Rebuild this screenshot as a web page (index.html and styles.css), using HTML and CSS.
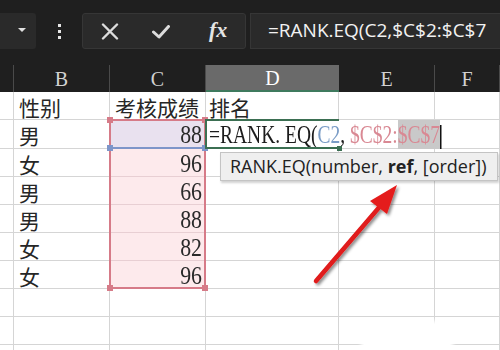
FILE: index.html
```html
<!DOCTYPE html>
<html>
<head>
<meta charset="utf-8">
<link rel="stylesheet" href="styles.css">
</head>
<body>
<div class="app">
  <div class="topbar">
    <div class="namebox"><span class="caret"></span></div>
    <div class="grip"><i></i><i></i><i></i></div>
    <div class="fxbtns">
      <svg class="ico-x" width="18" height="17" viewBox="0 0 18 17"><path d="M2 1.5 L16 15.5 M16 1.5 L2 15.5" stroke="#dcdcdc" stroke-width="2.4" fill="none" stroke-linecap="round"/></svg>
      <svg class="ico-ok" width="18" height="14" viewBox="0 0 18 14"><path d="M1.5 7 L7 12 L16.5 1.5" stroke="#dcdcdc" stroke-width="3" fill="none" stroke-linecap="round" stroke-linejoin="round"/></svg>
      <span class="fx">fx</span>
    </div>
    <div class="formula">=RANK.EQ(C2,$C$2:$C$7</div>
  </div>
  <div class="sheet">
    <div class="hd corner"></div><div class="hd">B</div><div class="hd">C</div><div class="hd active">D</div><div class="hd">E</div><div class="hd">F</div>

    <div class="c"></div><div class="c t">性别</div><div class="c t">考核成绩</div><div class="c t td">排名</div><div class="c"></div><div class="c"></div>
    <div class="c"></div><div class="c t">男</div><div class="c n cv"><span>88</span></div><div class="c"></div><div class="c"></div><div class="c"></div>
    <div class="c"></div><div class="c t">女</div><div class="c n sp"><span>96</span></div><div class="c"></div><div class="c"></div><div class="c"></div>
    <div class="c"></div><div class="c t">男</div><div class="c n sp"><span>66</span></div><div class="c"></div><div class="c"></div><div class="c"></div>
    <div class="c"></div><div class="c t">男</div><div class="c n sp"><span>88</span></div><div class="c"></div><div class="c"></div><div class="c"></div>
    <div class="c"></div><div class="c t">女</div><div class="c n sp"><span>82</span></div><div class="c"></div><div class="c"></div><div class="c"></div>
    <div class="c"></div><div class="c t">女</div><div class="c n sp"><span>96</span></div><div class="c"></div><div class="c"></div><div class="c"></div>
    <div class="c"></div><div class="c"></div><div class="c"></div><div class="c"></div><div class="c"></div><div class="c"></div>
    <div class="c"></div><div class="c"></div><div class="c"></div><div class="c"></div><div class="c"></div><div class="c"></div>
    <div class="c"></div><div class="c"></div><div class="c"></div><div class="c"></div><div class="c"></div><div class="c"></div>

    <div class="sel">
      <span class="h tl"></span><span class="h tr"></span><span class="h bl"></span><span class="h br"></span>
    </div>
    <div class="curline"><span class="hb l"></span><span class="hb r"></span></div>
    <div class="edit"><span class="etext"><span class="k">=RANK. EQ(</span><span class="b">C2</span><span class="k">, </span><span class="p">$C$2:</span><span class="p hl">$C$7</span><span class="caretbar"></span></span></div>
    <div class="editbox"><span class="gh"></span></div>

    <div class="tip">RANK.EQ(number, <b>ref</b>, [order])</div>
    <div class="blob"></div>
  </div>
  <svg class="arrow" width="500" height="350" viewBox="0 0 500 350">
    <defs>
      <filter id="sh" x="-20%" y="-20%" width="140%" height="140%">
        <feDropShadow dx="2" dy="2" stdDeviation="1.6" flood-color="#000" flood-opacity="0.45"/>
      </filter>
    </defs>
    <g filter="url(#sh)">
      <line x1="316" y1="281" x2="382" y2="204" stroke="#e01a1a" stroke-width="4.5" stroke-linecap="round"/>
      <polygon points="397,185 370,201 387,214" fill="#e41c1c"/>
    </g>
  </svg>
</div>
</body>
</html>
```
FILE: styles.css
```css
html, body {
  margin: 0;
  padding: 0;
}
body {
  width: 500px;
  height: 350px;
  overflow: hidden;
  background: #ffffff;
}
.app {
  position: relative;
  width: 500px;
  height: 350px;
  overflow: hidden;
}
.topbar {
  height: 65px;
  box-sizing: border-box;
  padding-top: 13px;
  background: #1f1f1f;
  display: flex;
  align-items: flex-start;
}
.namebox {
  width: 36px;
  height: 36px;
  background: #2a2a2a;
  border-radius: 0 3px 3px 0;
  display: flex;
  align-items: center;
  padding-left: 18px;
  box-sizing: border-box;
}
.caret {
  width: 0;
  height: 0;
  border-left: 4px solid transparent;
  border-right: 4px solid transparent;
  border-top: 4px solid #e0e0e0;
  margin-top: -2px;
}
.grip {
  width: 46px;
  height: 36px;
  display: flex;
  flex-direction: column;
  align-items: center;
  justify-content: center;
  gap: 3px;
}
.grip i {
  display: block;
  width: 3px;
  height: 3px;
  background: #e6e6e6;
}
.fxbtns {
  width: 164px;
  height: 36px;
  box-sizing: border-box;
  background: #2a2a2a;
  border: 1px solid #363636;
  border-radius: 3px;
  display: flex;
  align-items: center;
}
.ico-x {
  margin-left: 18px;
}
.ico-ok {
  margin-left: 33px;
  margin-top: 2px;
}
.fx {
  margin-left: 39px;
  font-family: "Liberation Serif", serif;
  font-style: italic;
  font-weight: bold;
  font-size: 22px;
  color: #e4e4e4;
  margin-top: -2px;
}
.formula {
  flex: 1;
  margin-left: 4px;
  height: 36px;
  background: #2a2a2a;
  border: 1px solid #363636;
  border-right: none;
  box-sizing: border-box;
  padding-left: 17px;
  font-family: "Open Sans", sans-serif;
  font-size: 19px;
  line-height: 33px;
  color: #f2f2f2;
  white-space: nowrap;
}
.sheet {
  position: relative;
  display: grid;
  grid-template-columns: 14px 96px 96px 133px 96px 1fr;
  grid-template-rows: 27px 28px 29px repeat(8, 28px);
}
.hd {
  background: #1f1f1f;
  border-right: 1px solid #4a4a4a;
  font-family: "Liberation Serif", serif;
  font-size: 20px;
  color: #d2d2d2;
  display: flex;
  align-items: center;
  justify-content: center;
  padding-top: 1px;
  box-sizing: border-box;
}
.hd.active {
  background: #6a6a6a;
  color: #ffffff;
  border-bottom: 2px solid #3f7a5e;
  border-right: none;
  padding-top: 2px;
}
.c {
  background: #ffffff;
  border-right: 1px solid #d5d5d5;
  border-bottom: 1px solid #d5d5d5;
  box-sizing: border-box;
  display: flex;
  align-items: center;
  white-space: nowrap;
}
.c.sp {
  background: #fdeaec;
  border-bottom-color: #e8cfd3;
}
.c.cv {
  background: #e9e1ef;
}
.c.t {
  font-family: "Noto Sans CJK SC", sans-serif;
  font-size: 21px;
  color: #262626;
  padding-left: 5px;
  padding-top: 2px;
}
.c.td {
  padding-left: 3px;
}
.c.n {
  justify-content: flex-end;
  padding-right: 3px;
  font-family: "Liberation Serif", serif;
  font-size: 26px;
  color: #2a2a2a;
  padding-top: 2px;
}
.c.n span {
  display: inline-block;
  transform: scaleX(0.84);
  transform-origin: right center;
}
.sel {
  position: absolute;
  grid-column: 3 / 4;
  grid-row: 3 / 9;
  top: -1px;
  left: -1px;
  right: 0;
  bottom: 0;
  border: 2px solid #d67b88;
}
.h, .hb {
  position: absolute;
  width: 6px;
  height: 6px;
  background: #d67b88;
}
.h.tl { left: -4px; top: -4px; }
.h.tr { right: -4px; top: -4px; }
.h.bl { left: -4px; bottom: -4px; }
.h.br { right: -4px; bottom: -4px; }
.curline {
  position: absolute;
  grid-column: 3 / 4;
  grid-row: 3 / 4;
  left: -1px;
  right: 0;
  bottom: 0;
  height: 2px;
  background: #7d95c9;
}
.hb {
  background: #7d95c9;
  top: -2px;
}
.hb.l { left: -2px; }
.hb.r { right: -2px; }
.edit {
  position: absolute;
  grid-column: 4 / 6;
  grid-row: 3 / 4;
  top: 0;
  left: 0;
  right: 1px;
  bottom: 1px;
  background: #ffffff;
  display: flex;
  align-items: center;
  padding-left: 3px;
  white-space: nowrap;
  font-family: "Liberation Serif", serif;
  font-size: 26px;
  color: #1c1c1c;
  padding-top: 1px;
}
.etext {
  display: inline-block;
  transform: scaleX(0.75);
  transform-origin: left center;
}
.etext .b { color: #7a9cc6; }
.etext .p { color: #d98893; }
.etext .hl { background: #c9c9c9; }
.caretbar {
  display: inline-block;
  width: 2px;
  height: 24px;
  background: #111;
  vertical-align: middle;
}
.editbox {
  position: absolute;
  grid-column: 4 / 5;
  grid-row: 3 / 4;
  top: -1px;
  left: -1px;
  right: 0;
  bottom: 0;
  border: 2px solid #3b6f52;
  border-right: none;
}
.gh {
  position: absolute;
  right: -3px;
  bottom: -4px;
  width: 5px;
  height: 5px;
  background: #3b6f52;
}
.tip {
  position: absolute;
  left: 220px;
  top: 87px;
  width: 278px;
  height: 29px;
  box-sizing: border-box;
  background: #efefef;
  border: 1px solid #c4c4c4;
  box-shadow: 1px 2px 2px rgba(0, 0, 0, 0.18);
  padding-left: 9px;
  font-family: "Open Sans", sans-serif;
  font-size: 18px;
  line-height: 26px;
  color: #222;
  white-space: nowrap;
}
.tip b {
  font-weight: 700;
}
.blob {
  position: absolute;
  left: 364px;
  top: 259px;
  width: 86px;
  height: 40px;
  background: #ffffff;
  box-shadow: 0 0 4px 3px #ffffff;
}
.arrow {
  position: absolute;
  left: 0;
  top: 0;
  pointer-events: none;
}
```
